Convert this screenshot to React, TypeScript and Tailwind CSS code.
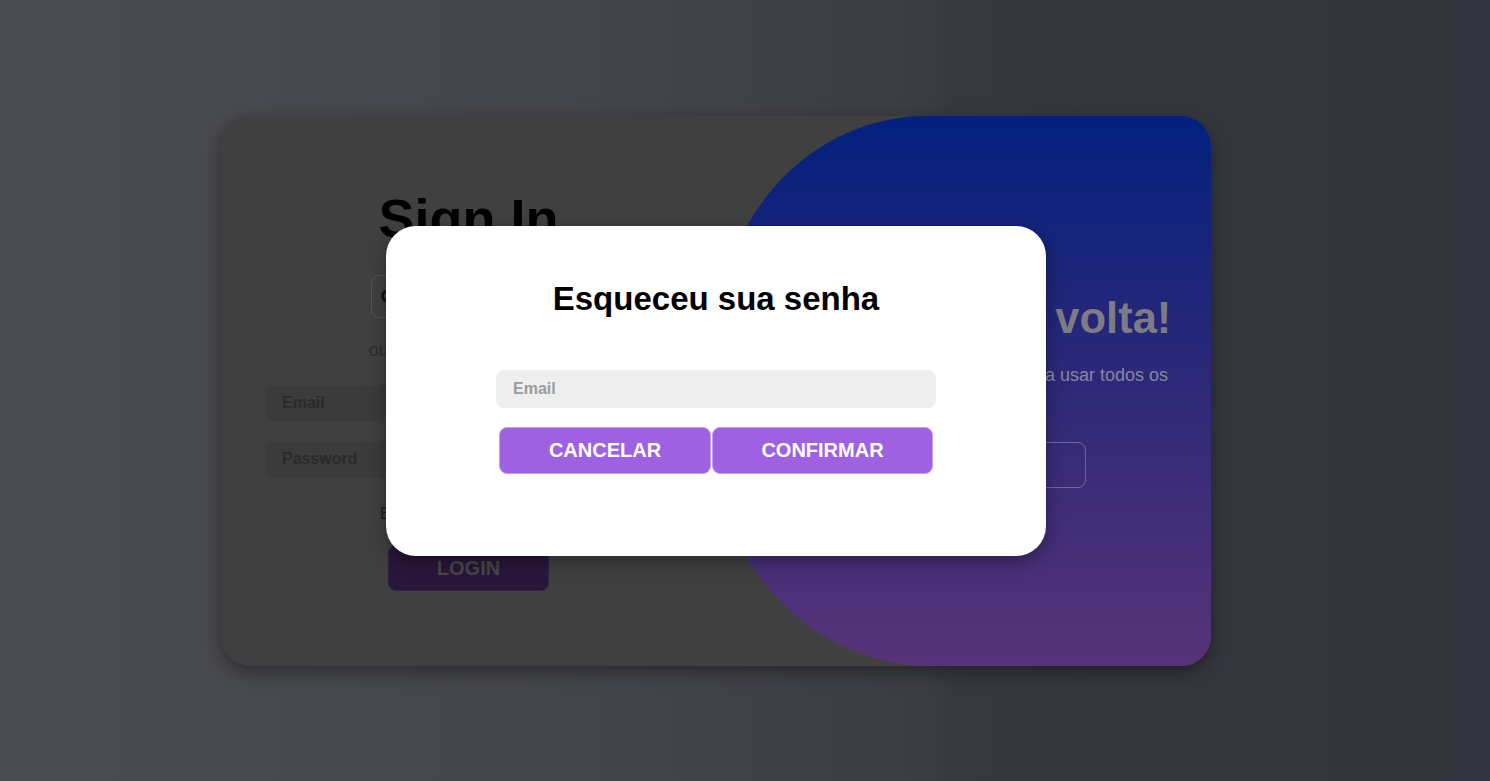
import { FaGooglePlusG, FaFacebookF, FaGithub, FaLinkedinIn } from "react-icons/fa";

const font = "font-['Liberation_Sans',Arial,sans-serif]";

const socialIcons = [FaGooglePlusG, FaFacebookF, FaGithub, FaLinkedinIn];

const SignInPanel = () => (
  <div className="w-[495px] shrink-0 flex flex-col items-center">
    <h1 className="mt-[72px] text-[54px] leading-[60px] font-bold text-black">Sign In</h1>
    <div className="mt-[27px] flex gap-[8px]">
      {socialIcons.map((Icon, i) => (
        <div
          key={i}
          className="w-[43px] h-[43px] rounded-[9px] border border-[#555555] flex items-center justify-center text-[#0d0d0d]"
        >
          <Icon size={22} />
        </div>
      ))}
    </div>
    <p className="mt-[22px] text-[17.5px] leading-[20px] text-[#2b2b2b]">ou use seu email e senha</p>
    <div className="mt-[25px] w-[407px] h-[36px] rounded-[8px] bg-[#3b3b3b] px-[17px] flex items-center text-[16px] font-bold text-[#2a2a2a]">
      Email
    </div>
    <div className="mt-[20px] w-[407px] h-[37px] rounded-[8px] bg-[#3b3b3b] px-[17px] flex items-center text-[16px] font-bold text-[#2a2a2a]">
      Password
    </div>
    <p className="mt-[26px] text-[16.5px] leading-[18px] text-[#1c1c1c]">Esqueceu a sua senha?</p>
    <button className="mt-[23px] w-[161px] h-[46px] rounded-[8px] bg-[#28173a] border border-[#30204a] text-[20px] font-bold text-[#474747]">
      LOGIN
    </button>
  </div>
);

const WelcomePanel = () => (
  <div className="flex-1 flex flex-col items-center rounded-tl-[210px_230px] rounded-bl-[215px_225px] bg-[linear-gradient(to_bottom,#03207f,#2a2878_45%,#573379)]">
    <h2 className="mt-[178px] text-[43.5px] leading-[48px] font-bold text-[#7d7c85] whitespace-nowrap">
      Bem-vindo de volta!
    </h2>
    <p className="mt-[20px] w-[420px] text-center text-[18px] leading-[26px] text-[#8886a2]">
      Entre com seus dados pessoais para usar todos os recursos do site
    </p>
    <button className="mt-[28px] w-[244px] h-[46px] rounded-[8px] border border-[#6d6a8f] text-[20px] font-bold text-[#7d7c85]">
      CADASTRAR
    </button>
  </div>
);

const ForgotModal = () => (
  <div className="absolute inset-0 flex items-center justify-center pr-[58px]">
    <div className="w-[660px] h-[330px] rounded-[30px] bg-white shadow-[0_6px_18px_rgba(0,0,0,0.35)] flex flex-col items-center">
      <h2 className="mt-[55px] text-[33px] leading-[36px] font-bold text-black">Esqueceu sua senha</h2>
      <div className="mt-[53px] w-[440px] h-[38px] rounded-[8px] bg-[#eeeeee] px-[17px] flex items-center text-[16px] font-bold text-[#9b9b9b]">
        Email
      </div>
      <div className="mt-[19px] flex gap-[1px]">
        <button className="w-[212px] h-[47px] rounded-[8px] bg-[#9e61e2] border border-[#c4a0ee] text-[20px] font-bold text-white">
          CANCELAR
        </button>
        <button className="w-[221px] h-[47px] rounded-[8px] bg-[#9e61e2] border border-[#c4a0ee] text-[20px] font-bold text-white">
          CONFIRMAR
        </button>
      </div>
    </div>
  </div>
);

export default function App() {
  return (
    <div
      className={`${font} relative w-full h-[781px] overflow-hidden bg-[linear-gradient(to_right,#4b4c51_0%,#44454b_40%,#3c3d43_62%,#363840_64%,#33353e_100%)] flex items-center justify-center pr-[58px]`}
    >
      <div className="w-[990px] h-[550px] rounded-[30px] overflow-hidden bg-[#404040] shadow-[0_6px_18px_rgba(0,0,0,0.4)] flex">
        <SignInPanel />
        <WelcomePanel />
      </div>
      <ForgotModal />
    </div>
  );
}
